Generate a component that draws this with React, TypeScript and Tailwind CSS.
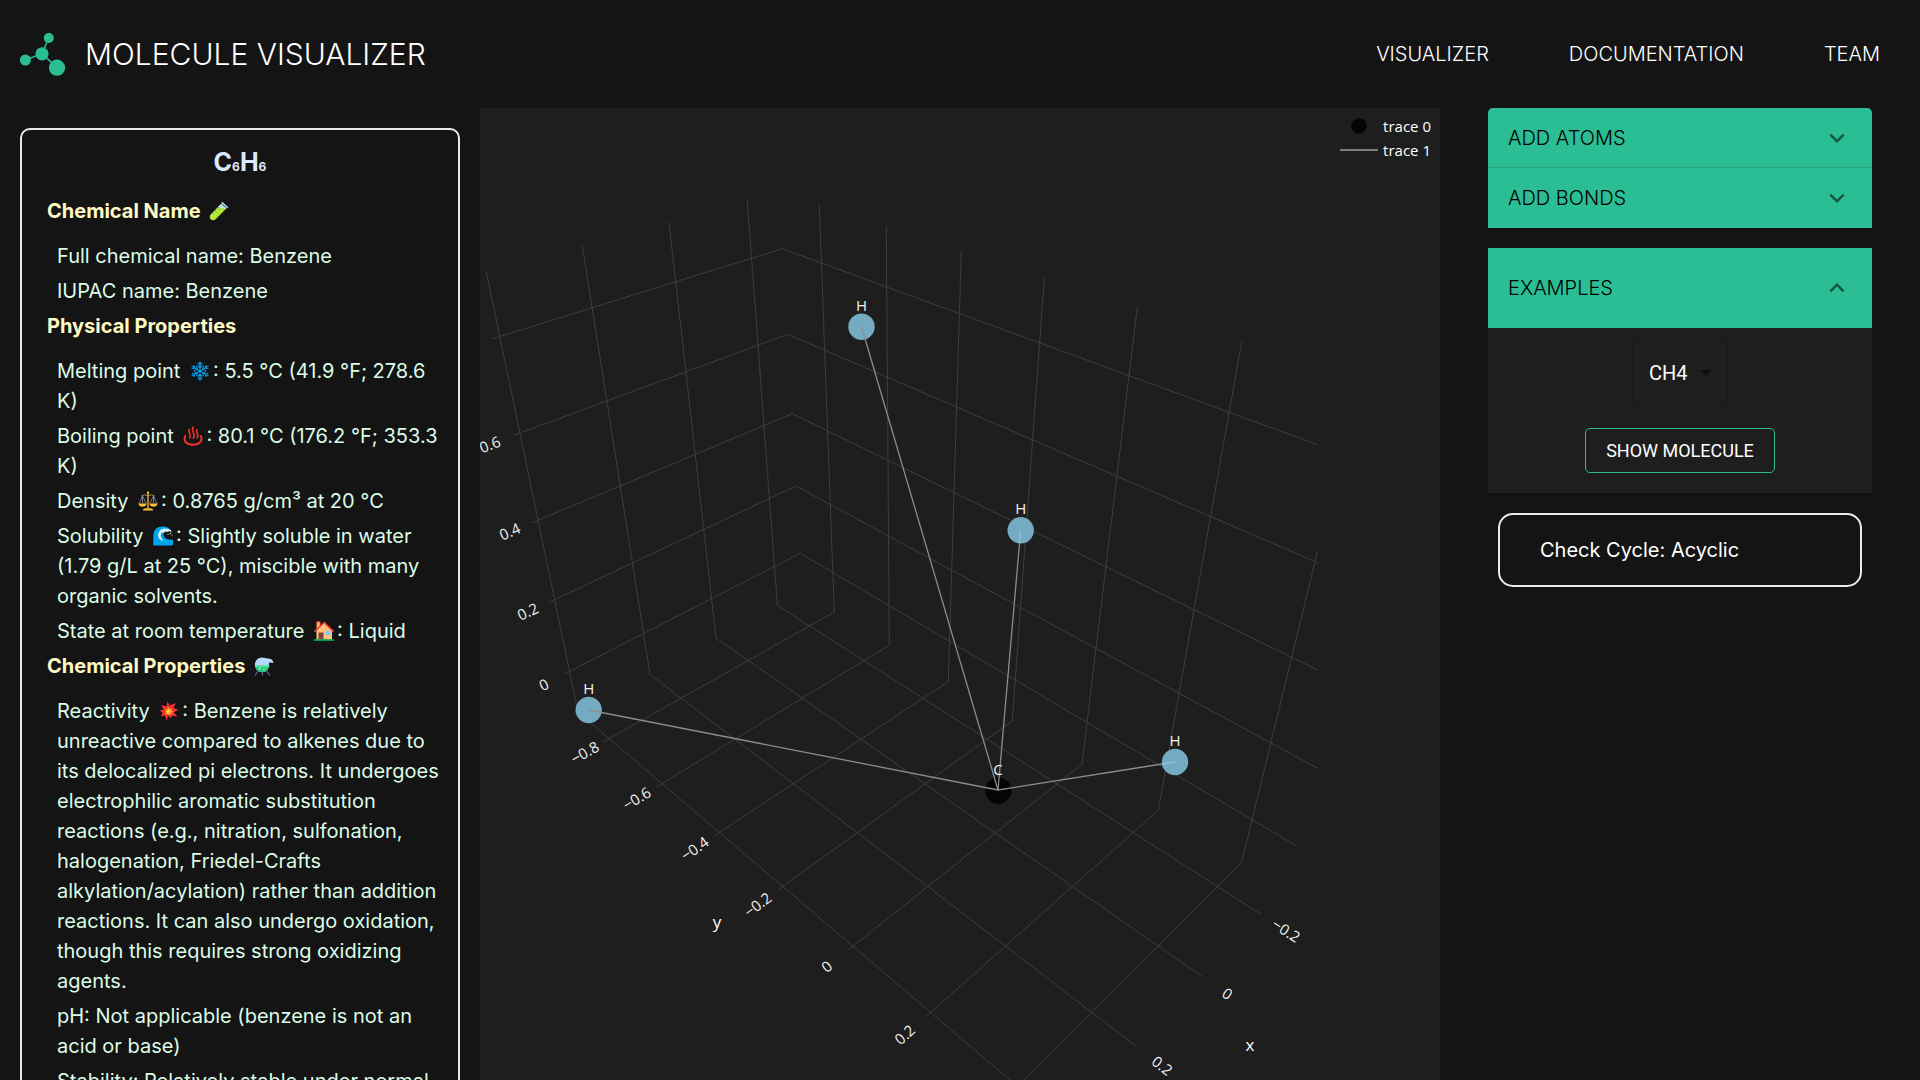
import React from "react";

const INTER = "font-['Inter',sans-serif]";
const EMOJI = "ml-1 mr-[3px] inline-block h-5 w-5 align-[-3px]";

function Logo() {
  return (
    <svg viewBox="0 0 46 44" className="h-11 w-[46px]" fill="#2bbd93" aria-hidden="true">
      <path d="M5.3 28 22 21.7 28.7 6M22 21.7 37 35.7" stroke="#2bbd93" strokeWidth="1.6" fill="none" />
      <circle cx="5.4" cy="28" r="5.5" />
      <circle cx="22" cy="21.8" r="6.6" />
      <circle cx="28.8" cy="6" r="5" />
      <circle cx="37" cy="35.7" r="8.1" />
    </svg>
  );
}

function TestTube() {
  return (
    <svg viewBox="0 0 20 20" className={EMOJI} role="img" aria-label="test tube">
      <path d="M12.5 2.5 2 13q-2.4 2.9-.3 5.2 2.5 2 5.2-.3L17.3 7.5Z" fill="#b9ea3f" />
      <path d="M11.5 3.5 9 6l8 1.7.7-.7Z" fill="#b4dbfb" />
      <path d="M13.6.9 19.3 6.3q-.2 1-1.2.8L12.3 2q.2-1.2 1.3-1.1Z" fill="#b4dbfb" />
      <path d="m8.5 6.500 1.2.8M5.800 9.200l1.200.8M3.300 11.700l1.200.8M10.500 8.500l.8.600M7.700 11l.8.600" stroke="#2f9e6e" strokeWidth="1.2" />
      <path d="M15 8 5.500 17.500" stroke="#86c721" strokeWidth=".6" />
    </svg>
  );
}

function Snowflake() {
  return (
    <svg viewBox="0 0 20 20" className={EMOJI} role="img" aria-label="snowflake" stroke="#05a1ee" strokeWidth="1.1" strokeLinecap="round" fill="none">
      {[0, 60, 120, 180, 240, 300].map((a) => (
        <path key={a} transform={`rotate(${a} 10 10)`} d="M10 10V.7M8.200 2 10 3.800 11.800 2M7.800 4.700 10 6.900l2.200-2.200" />
      ))}
    </svg>
  );
}

function HotSprings() {
  return (
    <svg viewBox="0 0 20 20" className={EMOJI} role="img" aria-label="hot springs" stroke="#f8312f" fill="none" strokeLinecap="round">
      <path d="M2.300 10C-.2 14.500 3.500 18.700 10 18.700S20.200 14.500 17.700 10" strokeWidth="1.9" />
      <path d="M6.300 3.500c-2 2.800 2.600 4 .4 8.500M10.200 1c-2.600 4 2.800 6 .2 11.500M14 3.500c-2 2.800 2.400 4 .2 8.500" strokeWidth="1.600" />
    </svg>
  );
}

function Scales() {
  return (
    <svg viewBox="0 0 20 20" className={EMOJI} role="img" aria-label="balance scale">
      <path d="M4.500 5 1 12.500M4.500 5l3.700 7.500M15.500 5l-3.700 7.500M15.500 5l3.600 7.500M4.500 5v7.500M15.500 5v7.500" stroke="#998ea4" strokeWidth=".8" />
      <path d="M3 5.200Q6.500 2.500 10 4.800q3.500-2.300 7 .4" stroke="#b08a4a" strokeWidth="1" fill="none" />
      <path d="M9.300 1h1.400v16H9.300Z" fill="#f3ad3a" />
      <circle cx="10" cy="1.500" r="1.100" fill="#fcd53f" />
      <path d="M.3 12.500h8.400q-1 3.200-4.200 3.200T.3 12.500ZM11.300 12.500h8.400q-1 3.200-4.200 3.200t-4.200-3.200Z" fill="#fcbf35" />
      <path d="M4.800 19.500q0-1.800 3.200-2.200h4q3.200.4 3.200 2.200Z" fill="#fcbf35" />
    </svg>
  );
}

function Wave() {
  return (
    <svg viewBox="0 0 20 20" className={EMOJI} role="img" aria-label="water wave">
      <path d="M.3 19.500V9Q1 .5 9.500.5q6.500 0 9 4.500-4-1.500-7 1-2.500 3.500.5 6 3 2.300 8 1.500v4.700q0 1.300-1.300 1.300Z" fill="#00a6ed" />
      <path d="M8.500 6.500Q6 12 11 15q-6-1-6-6.500 1-5 6-6 5-.5 8 3-2 .5-3-.5-1 1.500-3 .5-2 1.500-4.500 1Z" fill="#d9f1fd" />
      <circle cx="17.300" cy="7.500" r=".7" fill="#d9f1fd" />
      <circle cx="19" cy="9" r=".6" fill="#d9f1fd" />
      <circle cx="15" cy="8.300" r=".6" fill="#d9f1fd" />
    </svg>
  );
}

function House() {
  return (
    <svg viewBox="0 0 20 20" className={EMOJI} role="img" aria-label="house">
      <path d="M2.500 1h3.800v7H2.500Z" fill="#f7a55f" />
      <path d="M2.500 9.500 10.200 2 18 9.500V18.500H2.500Z" fill="#ffc17d" />
      <path d="M.8 10.300 10.200 1.500l9.200 8.800" stroke="#f8393a" strokeWidth="1.600" strokeLinecap="round" fill="none" />
      <path d="M2.200.8h4.300" stroke="#f8393a" strokeWidth="1.200" />
      <path d="M4.500 11.500h5v7h-5Z" fill="#7d4533" />
      <path d="M12 10h4.300v4H12Z" fill="#7dc6fb" />
      <path d="M0 18.400h20v1.300H0Z" fill="#00d26a" />
    </svg>
  );
}

function Flask() {
  return (
    <svg viewBox="0 0 20 20" className={EMOJI} role="img" aria-label="alembic">
      <path d="m4 15-3 4.300M12.500 15l3.500 4.300M8.500 16v3.500" stroke="#635994" strokeWidth="1.200" />
      <path d="M.8 8Q2 1.500 8 1.500L17 3q2 1 2.500 4L15 6.500q.8 9-7 9.800Q1 15.500.8 8Z" fill="#b4d9fa" />
      <path d="M1 9h14.400q-.6 6.800-7.200 7.300Q1.500 15.500 1 9Z" fill="#26c97a" />
      <path d="M1 9h14.400l-.3 2H1.300Z" fill="#5ee0a0" />
      <circle cx="6" cy="12.500" r=".9" fill="#c4f5da" />
      <circle cx="10" cy="13.500" r=".8" fill="#c4f5da" />
    </svg>
  );
}

function Collision() {
  return (
    <svg viewBox="0 0 20 20" className={EMOJI} role="img" aria-label="collision">
      <path d="M8.600.5l2 4.300L17 2l-2.500 5 5 1.700-4.600 2.600 3.600 4.500-5.200-1.200L12 17.300l-3-2.500-1.600 5-1.300-5.600L2 15.500l1.500-3.800L.5 9.500l4-1L2.300 4l5 1.600Z" fill="#f8312f" />
      <path d="m9.200 5.800 1.200 2.400 2.600-1-1 2.200 2 .8-2 1.200 1 1.900-2.200-.6-1.100 1.500-1-1.300-2.200.5.600-1.800-1.600-1.100 1.900-.6-.6-2 2 .7Z" fill="#ffb02e" />
      <circle cx="9.500" cy="10" r="1.300" fill="#fcd53f" />
    </svg>
  );
}

function InfoSection({ title, icon, children }: { title: string; icon?: React.ReactNode; children: React.ReactNode }) {
  return (
    <section className="mb-[5px]">
      <h3 className="mb-[15px] font-bold text-[#fef9c3]">
        {title} {icon}
      </h3>
      <ul className="ml-[10px] flex flex-col gap-[5px] text-[#dcfce7]">{children}</ul>
    </section>
  );
}

function MoleculeInfo() {
  return (
    <aside className="m-5 self-start rounded-[10px] border-2 border-[#e8e8ea] pb-5 pl-[25px] pr-[15px] pt-[15px] text-[20px] leading-[30px]">
      <h2 className="mb-3 pr-[10px] text-center text-[25px] font-bold leading-[34px] text-[#dbeafe]">
        C<span className="text-[12px]">6</span>H<span className="text-[12px]">6</span>
      </h2>
      <InfoSection title="Chemical Name" icon={<TestTube />}>
        <li>Full chemical name: Benzene</li>
        <li>IUPAC name: Benzene</li>
      </InfoSection>
      <InfoSection title="Physical Properties">
        <li>Melting point <Snowflake />: 5.5 °C (41.9 °F; 278.6 K)</li>
        <li>Boiling point <HotSprings />: 80.1 °C (176.2 °F; 353.3 K)</li>
        <li>Density <Scales />: 0.8765 g/cm³ at 20 °C</li>
        <li>Solubility <Wave />: Slightly soluble in water (1.79 g/L at 25 °C), miscible with many organic solvents.</li>
        <li>State at room temperature <House />: Liquid</li>
      </InfoSection>
      <InfoSection title="Chemical Properties" icon={<Flask />}>
        <li>
          Reactivity <Collision />: Benzene is relatively unreactive compared to alkenes due to its delocalized pi
          electrons. It undergoes electrophilic aromatic substitution reactions (e.g., nitration, sulfonation,
          halogenation, Friedel-Crafts alkylation/acylation) rather than addition reactions. It can also undergo
          oxidation, though this requires strong oxidizing agents.
        </li>
        <li>pH: Not applicable (benzene is not an acid or base)</li>
        <li>Stability: Relatively stable under normal conditions.</li>
      </InfoSection>
    </aside>
  );
}

const GRID = [
  "486.3,271.7 578,712 1010,1080",
  "582.3,245.7 650,674.3 857,832.3 1136.7,1046.7",
  "669,222.3 716,638 995,832.7 1202.3,976.7",
  "747.3,200.7 777.3,605.3 1133.3,832.7 1261,914.3",
  "564.3,674 800.3,553.3 1296.7,846",
  "549,602.3 796,486 1317.7,768.3",
  "532.3,522.7 792.3,413.7 1317.7,670",
  "513.7,435.3 787.7,334.3 1317.7,562.7",
  "492.7,338.7 782.3,248.7 1317.7,444.7",
  "819.3,204.3 834.3,612 603.7,741.7",
  "886.3,227 889.3,645.3 656.7,786.7",
  "961.3,250.7 948.3,681.7 714.3,835.7",
  "1044.3,277.7 1012.3,721 777.7,890",
  "1137.3,307.3 1082,764 848,950",
  "1241.7,341.7 1158.3,810.3 925.7,1017",
  "1317.7,550.7 1241.7,862.3 1024.3,1080",
];

const TICKS = [
  { t: "0.6", x: 490, y: 445, r: -21 },
  { t: "0.4", x: 510, y: 532, r: -23 },
  { t: "0.2", x: 528, y: 612, r: -25 },
  { t: "0", x: 544, y: 685, r: -27 },
  { t: "−0.8", x: 585, y: 753, r: -30 },
  { t: "−0.6", x: 637, y: 799, r: -32 },
  { t: "−0.4", x: 695, y: 849, r: -35 },
  { t: "−0.2", x: 758, y: 905, r: -37 },
  { t: "0", x: 827, y: 967, r: -40 },
  { t: "0.2", x: 905, y: 1035, r: -42 },
  { t: "−0.2", x: 1286, y: 931, r: 33 },
  { t: "0", x: 1227, y: 994, r: 35 },
  { t: "0.2", x: 1162, y: 1066, r: 38 },
];

const HYDROGENS = [
  { x: 861.5, y: 326.7 },
  { x: 1020.7, y: 530.3 },
  { x: 588.7, y: 710 },
  { x: 1175, y: 762 },
];

function Plot() {
  return (
    <main className="relative min-h-0 overflow-hidden bg-[#1e1e1e]">
      <svg
        viewBox="480 108 960 972"
        preserveAspectRatio="xMidYMin slice"
        className="block h-full w-full font-['Open_Sans',sans-serif]"
        role="img"
        aria-label="3D plot of the molecule"
      >
        <g fill="none" stroke="#3e3e3e" strokeWidth="1">
          {GRID.map((p) => (
            <polyline key={p} points={p} />
          ))}
        </g>
        <circle cx="998.3" cy="790.7" r="13.2" fill="#050505" />
        {HYDROGENS.map((h) => (
          <circle key={h.x} cx={h.x} cy={h.y} r="13.2" fill="#74abc3" />
        ))}
        <g stroke="#8c8c8c" strokeWidth="1.3">
          <path d="M998 790 861.5 326.700M998 790 588.700 710" />
          <path d="M998 790 1019.500 543.500M998 790 1162 764" />
        </g>
        <path d="M1019.500 543.500 1020.500 531M1162 764 1175 762" stroke="#8ac3da" strokeWidth="1.3" />
        <g fill="#f2f2f2" fontSize="15" textAnchor="middle">
          {HYDROGENS.map((h) => (
            <text key={h.x} x={h.x} y={h.y - 16}>H</text>
          ))}
          <text x="998" y="775">C</text>
        </g>
        <g fill="#f2f2f2" fontSize="15" textAnchor="middle">
          {TICKS.map((k) => (
            <text key={`${k.x}`} transform={`translate(${k.x} ${k.y}) rotate(${k.r})`} dy="5">{k.t}</text>
          ))}
        </g>
        <g fill="#ffffff" fontSize="17" textAnchor="middle" fontWeight="500">
          <text x="717" y="928">y</text>
          <text x="1250" y="1051">x</text>
        </g>
      </svg>
      <ul className="absolute right-[9px] top-[6px] font-['Open_Sans',sans-serif] text-[15px] font-medium leading-6 text-white">
        <li className="flex items-center gap-[5px]">
          <svg viewBox="0 0 38 16" className="h-4 w-[38px]" aria-hidden="true">
            <circle cx="19" cy="8" r="7.800" fill="#050505" />
          </svg>
          trace 0
        </li>
        <li className="flex items-center gap-[5px]">
          <svg viewBox="0 0 38 16" className="h-4 w-[38px]" aria-hidden="true">
            <path d="M0 8h38" stroke="#7f7f7f" strokeWidth="2" />
          </svg>
          trace 1
        </li>
      </ul>
    </main>
  );
}

function Chevron({ up = false }: { up?: boolean }) {
  return (
    <svg viewBox="0 0 24 24" className="h-[30px] w-[30px]" fill="#000000" fillOpacity="0.54" aria-hidden="true">
      {up ? (
        <path d="M7.410 15.410 12 10.830l4.590 4.580L18 14l-6-6-6 6z" />
      ) : (
        <path d="M16.590 8.590 12 13.170 7.410 8.590 6 10l6 6 6-6z" />
      )}
    </svg>
  );
}

const SUMMARY = "flex w-full items-center justify-between bg-[#2bbd93] px-5 text-left text-[20px] font-light text-black";

function Controls() {
  return (
    <aside className="px-12">
      <div className="overflow-hidden rounded-t-[5px] shadow-sm">
        <button type="button" aria-expanded="false" className={`${SUMMARY} h-[60px] border-b border-[#26a681]`}>
          ADD ATOMS
          <Chevron />
        </button>
        <button type="button" aria-expanded="false" className={`${SUMMARY} h-[60px]`}>
          ADD BONDS
          <Chevron />
        </button>
      </div>
      <div className="mt-5 bg-[#1e1e1e] shadow-sm">
        <button type="button" aria-expanded="true" className={`${SUMMARY} h-20`}>
          EXAMPLES
          <Chevron up />
        </button>
        <div className="flex flex-col items-center gap-5 pb-5 pt-[10px] font-['Roboto',sans-serif] text-white">
          <div className="relative">
            <select
              aria-label="Example molecule"
              defaultValue="CH4"
              className="h-[70px] w-24 appearance-none rounded-[5px] border border-[#191919] bg-[#1e1e1e] pl-4 text-[20px]"
            >
              <option>CH4</option>
              <option>C6H6</option>
            </select>
            <svg viewBox="0 0 12 6" className="pointer-events-none absolute right-4 top-8 h-[6px] w-3" fill="#0e0e0e" aria-hidden="true">
              <path d="M0 0h12L6 6z" />
            </svg>
          </div>
          <button type="button" className="h-[45px] rounded-[5px] border border-[#2bbd93] px-5 text-[18px] font-normal">
            SHOW MOLECULE
          </button>
        </div>
      </div>
      <p className="mx-[10px] mt-5 rounded-[15px] border-2 border-[#ececee] px-10 py-5 text-[20px] leading-[30px] text-white">
        Check Cycle: Acyclic
      </p>
    </aside>
  );
}

export default function App() {
  return (
    <div className={`flex h-screen flex-col overflow-hidden bg-[#141414] ${INTER}`}>
      <header className="flex h-[108px] shrink-0 items-center justify-between pl-5 pr-10 text-white">
        <a href="#home" className="flex items-center gap-[19px] text-[30px] font-light">
          <Logo />
          MOLECULE VISUALIZER
        </a>
        <nav className="flex gap-20 text-[20px] font-light">
          <a href="#visualizer">VISUALIZER</a>
          <a href="#documentation">DOCUMENTATION</a>
          <a href="#team">TEAM</a>
        </nav>
      </header>
      <div className="grid min-h-0 flex-1 grid-cols-[1fr_2fr_1fr] grid-rows-[minmax(0,1fr)]">
        <MoleculeInfo />
        <Plot />
        <Controls />
      </div>
    </div>
  );
}
